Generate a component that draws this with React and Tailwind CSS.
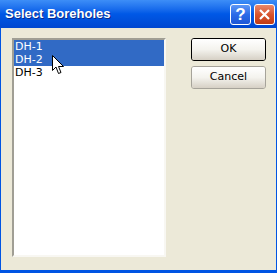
import React from 'react';

const items = ['DH-1', 'DH-2', 'DH-3'];

const Cursor = () => (
  <svg className="absolute left-[52px] top-[55px]" width="13" height="20" viewBox="0 0 13 20">
    <path d="M0.5 0.5 L0.5 15.5 L4 12 L6.5 18.5 L9 17.5 L6.5 11.5 L11.5 11.5 Z" fill="#fff" stroke="#000" strokeWidth="1" />
  </svg>
);

const TitleButton = ({ kind }) => (
  <div
    className={`w-[21px] h-[21px] rounded-[3px] border border-white flex items-center justify-center ${
      kind === 'close' ? 'bg-gradient-to-b from-[#e9886c] via-[#d8542e] to-[#c13b12]' : 'bg-gradient-to-b from-[#5f97f5] via-[#2a6ae8] to-[#1e57d6]'
    }`}
  >
    {kind === 'close' ? (
      <svg width="13" height="13" viewBox="0 0 13 13">
        <path d="M2 2 L11 11 M11 2 L2 11" stroke="#fff" strokeWidth="2.2" />
      </svg>
    ) : (
      <span className="text-white font-bold text-[17px] leading-none font-['Liberation_Sans',sans-serif]">?</span>
    )}
  </div>
);

const Button = ({ label, isDefault }) => (
  <div className={`w-[75px] h-[23px] rounded-[3px] border ${isDefault ? 'border-black' : 'border-[#a6a39a]'}`}>
    <div className="h-full w-full rounded-[2px] bg-gradient-to-b from-[#ffffff] via-[#f4f3ee] to-[#d6d0c5] flex items-center justify-center text-[11px] text-black font-['DejaVu_Sans',sans-serif]">
      {label}
    </div>
  </div>
);

const App = () => (
  <div className="w-[277px] h-[273px] bg-[#0054e3] relative font-['DejaVu_Sans',sans-serif]">
    {/* Title bar */}
    <div className="h-[28px] bg-gradient-to-b from-[#3d8ef7] via-[#0058e6] to-[#0047d0] flex items-center pl-[5px] pr-[2px]">
      <span className="flex-1 text-white font-bold text-[13px] font-['Liberation_Sans',sans-serif] [text-shadow:1px_1px_0_#0a2a8a]">
        Select Boreholes
      </span>
      <div className="flex gap-[3px] mt-[1px]">
        <TitleButton kind="help" />
        <TitleButton kind="close" />
      </div>
    </div>

    {/* Body */}
    <div className="mx-[1px] h-[242px] bg-[#ece9d8] flex pt-[10px] pl-[11px] gap-[25px]">
      <div className="w-[154px] h-[219px] border-t-2 border-l-2 border-t-[#a09e94] border-l-[#a09e94] border-b-2 border-r-2 border-b-[#f8f7f2] border-r-[#f8f7f2] bg-white">
        {items.map((it, i) => (
          <div
            key={it}
            className={`h-[13px] leading-[13px] text-[11px] pl-[1px] ${i < 2 ? 'bg-[#316ac5] text-white' : 'text-black'}`}
          >
            {it}
          </div>
        ))}
      </div>
      <div className="flex flex-col gap-[5px]">
        <Button label="OK" isDefault />
        <Button label="Cancel" />
      </div>
    </div>

    <Cursor />
  </div>
);

export default App;
